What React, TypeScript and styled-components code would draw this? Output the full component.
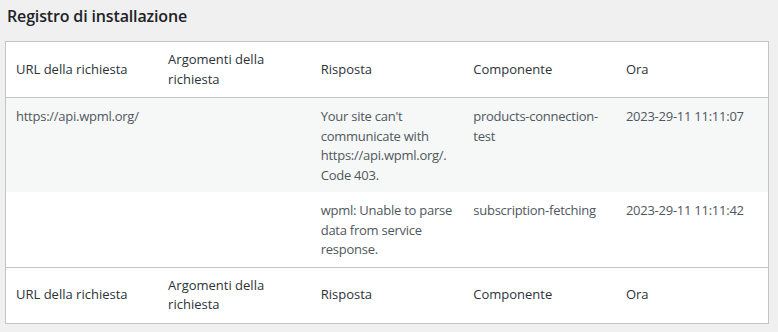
import React from "react";
import styled, { createGlobalStyle } from "styled-components";

const Global = createGlobalStyle`
  html, body { margin: 0; padding: 0; background: #f0f0f1; }
  body { font-family: "Open Sans", "Noto Sans", sans-serif; font-size: 13px; }
`;

const Page = styled.div`
  padding: 3px 9px 9px 5px;
`;

const Title = styled.h2`
  margin: 0 0 11px 2px;
  font-size: 16px;
  letter-spacing: -0.15px;
  line-height: 27px;
  font-weight: 600;
  color: #1d2327;
`;

const Table = styled.table`
  width: 100%;
  table-layout: fixed;
  border-collapse: collapse;
  border: 1px solid #c3c4c7;
  background: #fff;
`;

const HeadCell = styled.th`
  text-align: left;
  font-weight: 400;
  color: #2c3338;
  padding: 8px 10px;
  line-height: 19.5px;
  vertical-align: middle;
  height: 39px;
`;

const HeadRow = styled.tr<{ $pos: "top" | "bottom" }>`
  ${(p) => (p.$pos === "top" ? "border-bottom: 1px solid #c3c4c7;" : "border-top: 1px solid #c3c4c7;")}
`;

const BodyRow = styled.tr<{ $striped?: boolean }>`
  background: ${(p) => (p.$striped ? "#f6f7f7" : "#fff")};
`;

const Cell = styled.td`
  color: #50575e;
  padding: 9px 10px 7px;
  line-height: 19.5px;
  letter-spacing: -0.25px;
  vertical-align: top;
  word-wrap: break-word;
`;

const columns = ["URL della richiesta", "Argomenti della richiesta", "Risposta", "Componente", "Ora"];

const rows = [
  {
    url: "https://api.wpml.org/",
    args: "",
    resp: "Your site can't communicate with https://api.wpml.org/. Code 403.",
    comp: "products-connection-test",
    time: "2023-29-11 11:11:07",
  },
  {
    url: "",
    args: "",
    resp: "wpml: Unable to parse data from service response.",
    comp: "subscription-fetching",
    time: "2023-29-11 11:11:42",
  },
];

const Header = ({ pos }: { pos: "top" | "bottom" }) => (
  <HeadRow $pos={pos}>
    {columns.map((c) => (
      <HeadCell key={c}>{c}</HeadCell>
    ))}
  </HeadRow>
);

export default function App() {
  return (
    <Page>
      <Global />
      <Title>Registro di installazione</Title>
      <Table>
        <thead>
          <Header pos="top" />
        </thead>
        <tbody>
          {rows.map((r, i) => (
            <BodyRow key={i} $striped={i % 2 === 0}>
              <Cell>{r.url}</Cell>
              <Cell>{r.args}</Cell>
              <Cell>{r.resp}</Cell>
              <Cell>{r.comp}</Cell>
              <Cell>{r.time}</Cell>
            </BodyRow>
          ))}
        </tbody>
        <tfoot>
          <Header pos="bottom" />
        </tfoot>
      </Table>
    </Page>
  );
}
